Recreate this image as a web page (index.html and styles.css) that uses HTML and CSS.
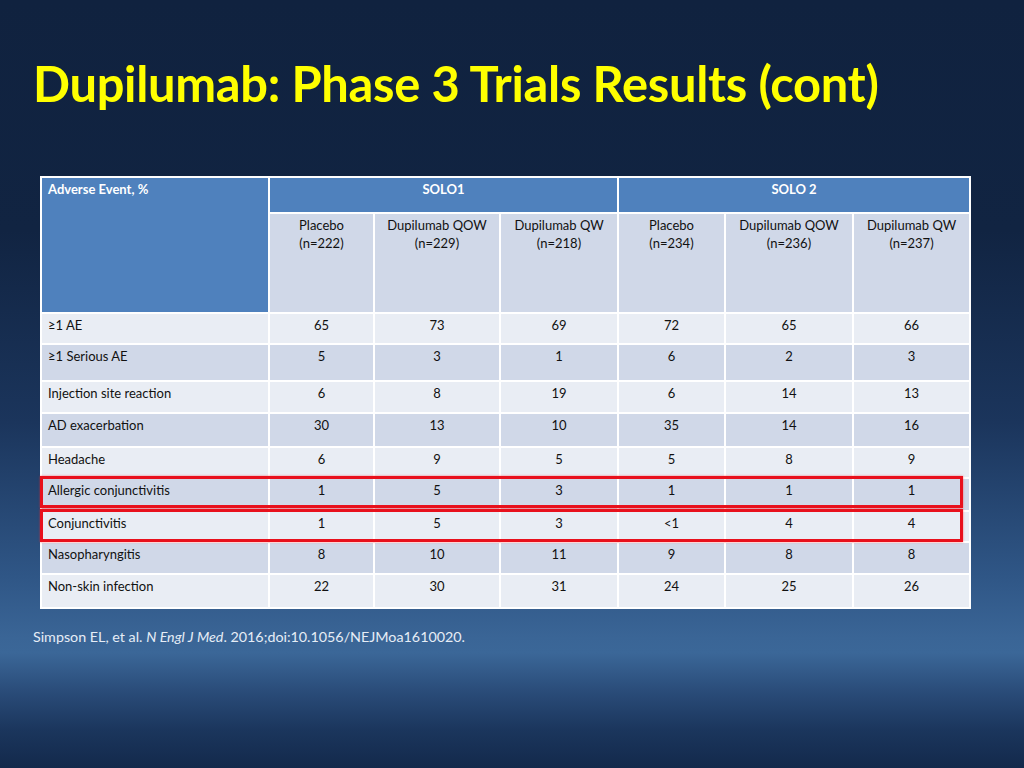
FILE: index.html
```html
<!DOCTYPE html>
<html lang="en">
<head>
<meta charset="utf-8">
<title>Dupilumab: Phase 3 Trials Results (cont)</title>
<link rel="stylesheet" href="styles.css">
</head>
<body>
<div class="slide">
  <h1 class="title">Dupilumab: Phase 3 Trials Results (cont)</h1>
  <div class="table-wrap">
    <table class="ae-table">
      <colgroup>
        <col class="c-label"><col class="c1"><col class="c2"><col class="c3"><col class="c4"><col class="c5"><col class="c6">
      </colgroup>
      <thead>
        <tr class="h1row">
          <th class="corner" rowspan="2">Adverse Event, %</th>
          <th class="group" colspan="3">SOLO1</th>
          <th class="group" colspan="3">SOLO 2</th>
        </tr>
        <tr class="h2row">
          <th class="sub">Placebo<br>(n=222)</th>
          <th class="sub">Dupilumab QOW<br>(n=229)</th>
          <th class="sub">Dupilumab QW<br>(n=218)</th>
          <th class="sub">Placebo<br>(n=234)</th>
          <th class="sub">Dupilumab QOW<br>(n=236)</th>
          <th class="sub">Dupilumab QW<br>(n=237)</th>
        </tr>
      </thead>
      <tbody>
        <tr class="light r31"><td>≥1 AE</td><td>65</td><td>73</td><td>69</td><td>72</td><td>65</td><td>66</td></tr>
        <tr class="dark r37"><td>≥1 Serious AE</td><td>5</td><td>3</td><td>1</td><td>6</td><td>2</td><td>3</td></tr>
        <tr class="light r32"><td>Injection site reaction</td><td>6</td><td>8</td><td>19</td><td>6</td><td>14</td><td>13</td></tr>
        <tr class="dark r34"><td>AD exacerbation</td><td>30</td><td>13</td><td>10</td><td>35</td><td>14</td><td>16</td></tr>
        <tr class="light r31"><td>Headache</td><td>6</td><td>9</td><td>5</td><td>5</td><td>8</td><td>9</td></tr>
        <tr class="dark r33"><td>Allergic conjunctivitis</td><td>1</td><td>5</td><td>3</td><td>1</td><td>1</td><td>1</td></tr>
        <tr class="light r31"><td>Conjunctivitis</td><td>1</td><td>5</td><td>3</td><td>&lt;1</td><td>4</td><td>4</td></tr>
        <tr class="dark r32"><td>Nasopharyngitis</td><td>8</td><td>10</td><td>11</td><td>9</td><td>8</td><td>8</td></tr>
        <tr class="light r34"><td>Non-skin infection</td><td>22</td><td>30</td><td>31</td><td>24</td><td>25</td><td>26</td></tr>
      </tbody>
    </table>
    <div class="hl hl-allergic"></div>
    <div class="hl hl-conj"></div>
  </div>
  <p class="ref">Simpson EL, et al. <i>N Engl J Med</i>. 2016;doi:10.1056/NEJMoa1610020.</p>
</div>
</body>
</html>
```

FILE: styles.css
```css
html, body {
  margin: 0;
  padding: 0;
}
body {
  width: 1024px;
  height: 768px;
  overflow: hidden;
  font-family: "Lato", "Open Sans", sans-serif;
}
.slide {
  width: 1024px;
  height: 768px;
  box-sizing: border-box;
  padding: 0 0 0 33px;
  background: linear-gradient(to bottom,
    #10223f 0%,
    #112442 30%,
    #1b355c 55%,
    #2f5686 75%,
    #3a6596 83%,
    #3b6798 85%,
    #2a4c79 90%,
    #1b365d 95%,
    #13294b 100%);
  display: flex;
  flex-direction: column;
}
.title {
  margin: 55px 0 0 0;
  font-weight: 700;
  font-size: 48.8px;
  line-height: 56px;
  color: #ffff00;
  letter-spacing: -0.3px;
  white-space: nowrap;
}
.table-wrap {
  position: relative;
  margin: 65px 0 0 7px;
  width: 929px;
}
.ae-table {
  width: 929px;
  table-layout: fixed;
  border-collapse: collapse;
  border: 2px solid #ffffff;
  font-size: 13px;
  line-height: 18px;
  color: #111111;
}
.c-label { width: 228px; }
.c1 { width: 105px; }
.c2 { width: 126px; }
.c3 { width: 118px; }
.c4 { width: 107px; }
.c5 { width: 128px; }
.c6 { width: 117px; }
.ae-table th,
.ae-table td {
  border: 2px solid #ffffff;
  padding: 2px 6px 0 6px;
  vertical-align: top;
  text-align: center;
  font-weight: 400;
}
.ae-table td:first-child {
  text-align: left;
}
.corner {
  background: #4f81bd;
  color: #ffffff;
  text-align: left !important;
  font-weight: 700 !important;
  font-size: 13px;
}
.group {
  background: #4f81bd;
  color: #ffffff;
  font-weight: 700 !important;
  font-size: 13px;
}
.h1row { height: 36px; }
.h2row { height: 100px; }
.sub { background: #d0d8e8; }
.light td { background: #e9edf4; }
.dark td { background: #d0d8e8; }
.r31 { height: 31px; }
.r32 { height: 32px; }
.r33 { height: 33px; }
.r34 { height: 34px; }
.r35 { height: 35px; }
.r37 { height: 37px; }
.hl {
  position: absolute;
  left: 0;
  width: 923px;
  box-sizing: border-box;
  border: 3px solid #e8101c;
  box-shadow: 0 0 2px rgba(255, 40, 40, 0.6);
  pointer-events: none;
}
.hl-allergic { top: 300px; height: 32px; }
.hl-conj { top: 333px; height: 33px; }
.ref {
  margin: 18px 0 0 0;
  font-size: 14.3px;
  line-height: 20px;
  color: #e6edf6;
}
```
